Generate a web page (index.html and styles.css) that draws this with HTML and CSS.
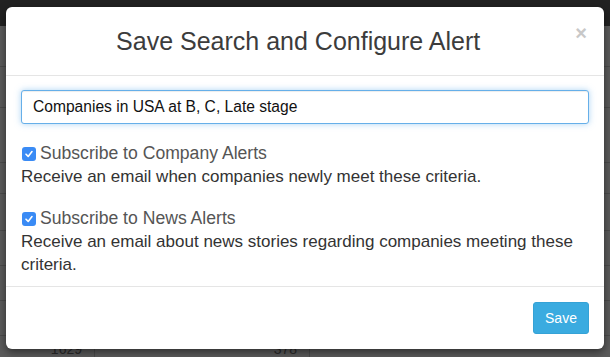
FILE: index.html
```html
<!DOCTYPE html>
<html>
<head>
<meta charset="utf-8">
<link rel="stylesheet" href="styles.css">
</head>
<body>
<div class="topbar"></div>
<div class="bg-table">
  <div class="bg-row r1"></div>
  <div class="bg-row r2"></div>
  <div class="bg-row r3"></div>
  <div class="bg-row r4"></div>
  <div class="bg-row r5"></div>
  <div class="bg-row r6"></div>
  <div class="bg-row r7"></div>
  <div class="bg-row r8"></div>
  <div class="bg-row last">
    <span class="cell c1">1629</span>
    <span class="cell c2">378</span>
    <span class="cell c3"></span>
  </div>
</div>

<div class="modal">
  <div class="modal-header">
    <h4 class="modal-title">Save Search and Configure Alert</h4>
    <span class="close">&times;</span>
  </div>
  <div class="modal-body">
    <div class="field">
      <input class="text-input" type="text" value="Companies in USA at B, C, Late stage">
    </div>
    <div class="option">
      <div class="option-label">
        <span class="check"><svg width="10" height="10" viewBox="0 0 10 10"><path d="M2 5.2 L4.2 7.4 L8 2.6" fill="none" stroke="#fff" stroke-width="1.6" stroke-linecap="round" stroke-linejoin="round"/></svg></span>
        <span>Subscribe to Company Alerts</span>
      </div>
      <p class="option-desc">Receive an email when companies newly meet these criteria.</p>
    </div>
    <div class="option">
      <div class="option-label">
        <span class="check"><svg width="10" height="10" viewBox="0 0 10 10"><path d="M2 5.2 L4.2 7.4 L8 2.6" fill="none" stroke="#fff" stroke-width="1.6" stroke-linecap="round" stroke-linejoin="round"/></svg></span>
        <span>Subscribe to News Alerts</span>
      </div>
      <p class="option-desc">Receive an email about news stories regarding companies meeting these criteria.</p>
    </div>
  </div>
  <div class="modal-footer">
    <button class="btn-save">Save</button>
  </div>
</div>
</body>
</html>
```

FILE: styles.css
```css
html, body {
  margin: 0;
  padding: 0;
  width: 610px;
  height: 357px;
  overflow: hidden;
}
body {
  background: #5b5b5b;
  font-family: "Liberation Sans", Arial, sans-serif;
  position: relative;
}
.topbar {
  height: 26px;
  background: #222;
}
.bg-row {
  border-bottom: 1px solid #4c4c4c;
  box-sizing: border-box;
}
.r1 { height: 41px; }
.r2 { height: 41px; }
.r3 { height: 55px; }
.r4 { height: 31px; }
.r5 { height: 37px; }
.r6 { height: 35px; }
.r7 { height: 35px; }
.r8 { height: 35px; }
.bg-row.last {
  border-bottom: none;
  display: flex;
  height: 21px;
  font-size: 14px;
  color: #2a2a2a;
}
.cell {
  box-sizing: border-box;
  padding-top: 5px;
}
.c1 {
  width: 95px;
  text-align: right;
  padding-right: 12px;
  border-right: 1px solid #4c4c4c;
}
.c2 {
  width: 215px;
  text-align: right;
  padding-right: 12px;
  border-right: 1px solid #4c4c4c;
}

.modal {
  position: absolute;
  top: 7px;
  left: 6px;
  width: 598px;
  background: #fff;
  border-radius: 6px;
  box-shadow: 0 3px 9px rgba(0,0,0,0.5);
}
.modal-header {
  display: flex;
  align-items: flex-start;
  padding: 15px 17px 15px 15px;
  border-bottom: 1px solid #e5e5e5;
}
.modal-title {
  flex: 1;
  margin: 0;
  text-align: center;
  font-size: 25px;
  font-weight: normal;
  line-height: 38px;
  color: #3c3c3c;
}
.close {
  margin-top: 1px;
  font-size: 20px;
  font-weight: bold;
  color: #c8c8c8;
  line-height: 20px;
}
.modal-body {
  padding: 14px 15px 10px;
}
.field {
  margin-bottom: 18px;
}
.text-input {
  display: block;
  box-sizing: border-box;
  width: 100%;
  height: 34px;
  padding: 6px 11px;
  font-family: "Liberation Sans", Arial, sans-serif;
  font-size: 15.6px;
  color: #111;
  border: 1px solid #66afe9;
  border-radius: 3px;
  outline: none;
  box-shadow: inset 0 1px 1px rgba(0,0,0,.075), 0 0 6px rgba(102,175,233,.55);
}
.option {
  margin-bottom: 19px;
}
.option:last-child {
  margin-bottom: 0;
}
.option-label {
  display: flex;
  align-items: center;
  gap: 4px;
  font-size: 17.6px;
  line-height: 23px;
  color: #555;
}
.check {
  width: 14px;
  height: 14px;
  border-radius: 3px;
  background: #3a8bf5;
  display: flex;
  align-items: center;
  justify-content: center;
  margin-left: 1px;
}
.option-desc {
  margin: 0;
  font-size: 17px;
  line-height: 23px;
  color: #333;
}
.modal-footer {
  border-top: 1px solid #e5e5e5;
  padding: 15px;
  display: flex;
  justify-content: flex-end;
}
.btn-save {
  height: 32px;
  width: 56px;
  background: #3aabe0;
  border: 1px solid #35a2d6;
  border-radius: 3px;
  color: #fff;
  font-family: "Liberation Sans", Arial, sans-serif;
  font-size: 14px;
  padding: 0;
}
```
